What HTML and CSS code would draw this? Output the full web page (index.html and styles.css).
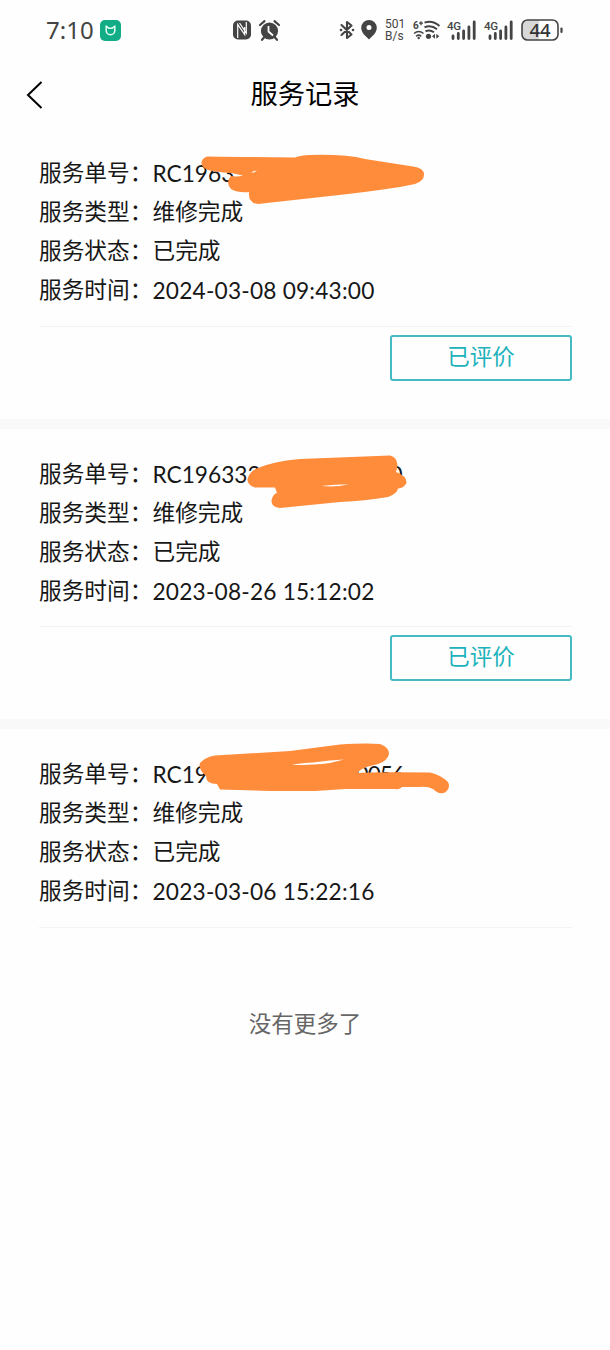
FILE: index.html
```html
<!DOCTYPE html>
<html lang="zh-CN">
<head>
<meta charset="utf-8">
<title>服务记录</title>
<link rel="stylesheet" href="styles.css">
</head>
<body>
<div class="screen">
  <header class="status">
    <span class="clock">7:10</span>
    <svg class="ic-app" width="21" height="21" viewBox="0 0 21 21"><rect width="21" height="21" rx="5" fill="#12ad86"/><path d="M6.200 5.500v5a4.300 4.300 0 0 0 8.600 0v-5M6.200 6l2.600 2.300h3.400L14.800 6" fill="none" stroke="#e5fff4" stroke-width="1.500"/></svg>
    <svg class="ic-nfc" width="18" height="20" viewBox="0 0 18 20"><rect width="18" height="19" y=".5" rx="5" fill="#444"/><path d="M4.700 18V4.500l7 10V7M6.500 3l6.800 10V2" fill="none" stroke="#fff" stroke-width="1.200"/></svg>
    <svg class="ic-alarm" width="21" height="21" viewBox="0 0 21 21"><circle cx="10.500" cy="11" r="8.600" fill="#444"/><path d="M1 5l4.500-3.800M20 5l-4.500-3.800M5 17.500l-2 2.300M16 17.500l2 2.300" stroke="#444" stroke-width="2.200" stroke-linecap="round"/><path d="M9.500 6v5.500l4.500 4" fill="none" stroke="#fff" stroke-width="1.800"/></svg>
    <svg class="ic-bt" width="16" height="20" viewBox="0 0 16 20"><path d="M2.500 5l10 9.500L8 18V2l4.500 3.500-10 9.500" fill="none" stroke="#444" stroke-width="2.100" stroke-linejoin="round" stroke-linecap="round"/><circle cx="2" cy="10" r="1.300" fill="#444"/><circle cx="14" cy="10" r="1.300" fill="#444"/></svg>
    <svg class="ic-pin" width="16" height="20" viewBox="0 0 16 20"><path d="M8 0a7.800 7.800 0 0 1 7.800 7.800C15.800 13 11 16.500 8 19.500 5 16.500.2 13 .2 7.800A7.800 7.800 0 0 1 8 0z" fill="#444"/><circle cx="8" cy="7.500" r="2.500" fill="#fff"/></svg>
    <div class="speed"><span>501</span><span>B/s</span></div>
    <svg class="ic-wifi" width="28" height="20" viewBox="0 0 28 20"><text x="0" y="8.500" class="tiny">6</text><path d="M6 3.200h4M8 1.200v4" stroke="#444" stroke-width="1.300"/><path d="M11.500 2.600q8-2.500 15 3.400M11.500 7.200q7-2.500 12.500 2M12.500 11.300q4.500-1.800 8.500 1" fill="none" stroke="#444" stroke-width="2"/><path d="M1 13.500q4.700-4 9.500 0M3.200 16.300q2.500-2.200 5 0" fill="none" stroke="#444" stroke-width="1.600"/><circle cx="5.700" cy="18" r="1.200" fill="#444"/><circle cx="15.500" cy="16.300" r="2.600" fill="#444"/><path d="M22 13.800v5l-3-2.500zM23.300 13.800v5l3-2.500z" fill="#444"/></svg>
    <svg class="ic-sig" width="30" height="21" viewBox="0 0 30 21"><text x="-1" y="9.500" class="net" textLength="14">4G</text><path d="M5 18.500v-2.500M10.300 18.500v-5M15.600 18.500v-7.500M20.900 18.500V7M26.200 18.500V2" stroke="#444" stroke-width="2.800" stroke-linecap="round"/></svg>
    <svg class="ic-sig" width="30" height="21" viewBox="0 0 30 21"><text x="-1" y="9.500" class="net" textLength="14">4G</text><path d="M5 18.500v-2.500M10.300 18.500v-5M15.600 18.500v-7.500M20.900 18.500V7M26.200 18.500V2" stroke="#444" stroke-width="2.800" stroke-linecap="round"/></svg>
    <svg class="ic-bat" width="43" height="22" viewBox="0 0 43 22"><path d="M18 1H7a6 6 0 0 0-6 6v8a6 6 0 0 0 6 6h11z" fill="#d8d8d8"/><rect x="1" y="1" width="36" height="20" rx="5.500" fill="none" stroke="#444" stroke-width="1.600"/><path d="M40.500 9.500v3.500" stroke="#444" stroke-width="2.200" stroke-linecap="round"/><text x="8.500" y="17.500" class="pct" textLength="21">44</text></svg>
  </header>

  <nav class="nav">
    <svg class="back" width="18" height="28" viewBox="0 0 18 28"><path d="M15.500 1L2 14l13.500 13" fill="none" stroke="#000" stroke-width="2"/></svg>
    <h1 class="title">服务记录</h1>
  </nav>

  <main class="list">
    <section class="card">
      <dl class="rows">
        <dt>服务单号&#xFF1A;</dt><dd class="code">RC1963</dd>
        <dt>服务类型&#xFF1A;</dt><dd>维修完成</dd>
        <dt>服务状态&#xFF1A;</dt><dd>已完成</dd>
        <dt>服务时间&#xFF1A;</dt><dd class="time">2024-03-08 09:43:00</dd>
      </dl>
      <div class="actions"><button class="rated">已评价</button></div>
    </section>
    <section class="card">
      <dl class="rows">
        <dt>服务单号&#xFF1A;</dt><dd class="code">RC196333<span class="tail">0</span></dd>
        <dt>服务类型&#xFF1A;</dt><dd>维修完成</dd>
        <dt>服务状态&#xFF1A;</dt><dd>已完成</dd>
        <dt>服务时间&#xFF1A;</dt><dd class="time">2023-08-26 15:12:02</dd>
      </dl>
      <div class="actions"><button class="rated">已评价</button></div>
    </section>
    <section class="card last">
      <dl class="rows">
        <dt>服务单号&#xFF1A;</dt><dd class="code">RC19<span class="tail tail-long">0056</span></dd>
        <dt>服务类型&#xFF1A;</dt><dd>维修完成</dd>
        <dt>服务状态&#xFF1A;</dt><dd>已完成</dd>
        <dt>服务时间&#xFF1A;</dt><dd class="time">2023-03-06 15:22:16</dd>
      </dl>
    </section>
  </main>
  <p class="end">没有更多了</p>

  <svg class="marks" width="610" height="1350" viewBox="0 0 610 1350" fill="#ff8c3b">
    <path d="M208 156.500Q240 157 295 157.500Q301 155 310 155Q345 154 365 159L413 166.500Q424 168 424 174.500Q424 181 415 184L400 187Q360 193 330 196L258 204Q248 203 249 192Q238 193 231 189Q225 182 231 176Q237 177 243 175.500L231 173Q216 172 208 170Q201 167 201.500 162Q203 157 208 156.500z"/>
    <path d="M251 172.500l3-1.500 3-.5-3 2z" fill="#fff"/>
    <path fill-rule="evenodd" d="M258 468Q275 461 300 459L390 455.500Q397 457 397.500 465Q397 469 396 472Q407 476 406.500 483Q404 488 398 488.500Q397 494 388 497Q365 501 340 502L280 508Q271 507 271.500 500Q273 494 277 493L275 487.500H255Q247 485 247.500 479Q250 471 258 468zM321 486q15 1.500 28-1.800q-14 .3-28 1.800z"/>
    <path fill-rule="evenodd" d="M215 755.500L290 751L340 744.500Q365 743 380 744Q389 747 389 754Q387 763 372 765.500Q360 768 358 773Q368 772 430 772.500Q441 775 448 782Q451 788 445 792.500Q439 795 433 789Q427 786 420 787H402Q399 790 395 789L345 789L315 791H270L220 789.500L217 784Q206 784 206 776Q198 769 200 763Q205 757 215 755.500zM292 765Q315 765 330 763L344 759.500Q330 760 313 762.500Q300 763 292 765z"/>
  </svg>
</div>
</body>
</html>
```
FILE: styles.css
```css
body { margin: 0; background: #fefefe; }
.screen {
  position: relative;
  width: 610px;
  height: 1350px;
  overflow: hidden;
  color: #171717;
  font-family: Lato, "Noto Sans CJK SC", sans-serif;
}
.status {
  display: flex;
  align-items: center;
  height: 60px;
  box-sizing: border-box;
  padding-left: 46px;
  color: #444;
}
.status svg { flex: none; display: block; overflow: visible; }
.clock { width: 54px; font: 24px/30px "Noto Sans", sans-serif; }
.ic-nfc { margin-left: 112px; }
.ic-alarm { margin-left: 8px; }
.ic-bt { margin-left: 59px; }
.ic-pin { margin-left: 6px; }
.speed {
  display: flex;
  flex-direction: column;
  width: 28px;
  margin-left: 8px;
  font: 12px/12px Roboto, sans-serif;
}
.ic-sig { margin-left: 7px; }
.ic-bat { margin-left: 6px; }
.tiny { font: 700 10px Roboto, sans-serif; fill: #444; }
.net { font: 500 11.5px Roboto, sans-serif; fill: #444; }
.pct { font: 500 18.5px "Noto Sans", sans-serif; fill: #333; }
.nav {
  display: grid;
  grid-template-columns: 60px 1fr 60px;
  align-items: center;
  height: 68px;
}
.back { margin: 2px 0 0 26px; }
.title {
  margin: 0;
  color: #000;
  font-size: 27.3px;
  font-weight: 400;
  line-height: 38px;
  text-align: center;
}
.card {
  height: 290.7px;
  box-sizing: border-box;
  padding: 26px 38px 0 39px;
}
.card:not(.last) { height: 300.7px; border-bottom: 10px solid #f9f9f9; }
.rows {
  display: grid;
  grid-template-columns: 113.5px 1fr;
  grid-auto-rows: 39px;
  margin: 0;
  padding-bottom: 15.5px;
  border-bottom: 1px solid #f3f3f3;
  font-size: 22.7px;
  line-height: 37px;
  white-space: nowrap;
}
.rows dt { font-family: "Noto Sans CJK SC", sans-serif; line-height: 36px; }
.rows dd { margin: 0; position: relative; }
.rows .code, .rows .time { line-height: 39px; }
.rows .time { letter-spacing: .2px; }
.tail { position: absolute; left: 237px; }
.tail-long { left: 203px; letter-spacing: -1px; }
.actions { display: flex; justify-content: flex-end; padding-top: 8px; }
.rated {
  width: 182px;
  height: 46px;
  box-sizing: border-box;
  padding: 0 0 5px;
  border: 2px solid #45bac3;
  border-radius: 3px;
  background: transparent;
  color: #20b2bb;
  font: 22.5px/37px "Noto Sans CJK SC", sans-serif;
}
.end {
  margin: -13px 0 0;
  color: #666;
  font-size: 22.5px;
  line-height: 34px;
  text-align: center;
}
.marks { position: absolute; left: 0; top: 0; pointer-events: none; }
```
